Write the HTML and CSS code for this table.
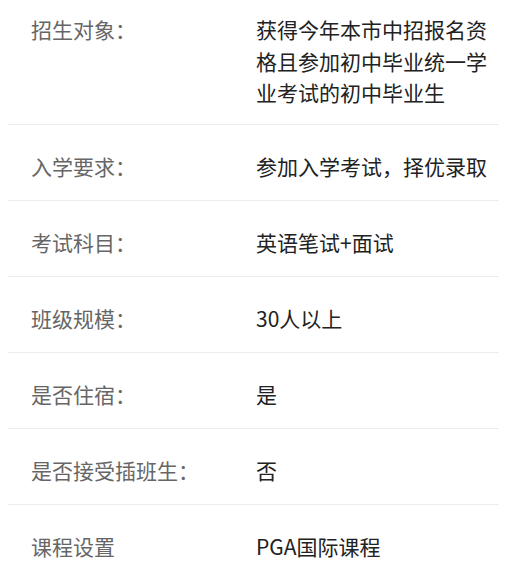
FILE: index.html
```html
<!DOCTYPE html>
<html lang="zh-CN">
<head>
  <meta charset="UTF-8">
  <meta name="viewport" content="width=device-width, initial-scale=1.0">
  <title>招生信息</title>
  <link rel="stylesheet" href="styles.css">
</head>
<body>
  <div class="info-list">
    <!-- 招生信息 -->
    <div class="info-row">
      <div class="info-label">招生对象：</div>
      <div class="info-value">获得今年本市中招报名资格且参加初中毕业统一学业考试的初中毕业生</div>
    </div>
    <div class="info-row">
      <div class="info-label">入学要求：</div>
      <div class="info-value">参加入学考试，择优录取</div>
    </div>
    <div class="info-row">
      <div class="info-label">考试科目：</div>
      <div class="info-value">英语笔试+面试</div>
    </div>
    <div class="info-row">
      <div class="info-label">班级规模：</div>
      <div class="info-value">30人以上</div>
    </div>
    <div class="info-row">
      <div class="info-label">是否住宿：</div>
      <div class="info-value">是</div>
    </div>
    <div class="info-row">
      <div class="info-label">是否接受插班生：</div>
      <div class="info-value">否</div>
    </div>
    <div class="info-row">
      <div class="info-label">课程设置</div>
      <div class="info-value">PGA国际课程</div>
    </div>
  </div>
</body>
</html>
```

FILE: styles.css
```css
body {
  margin: 0 8px;
  font-family: "Noto Sans CJK SC", "Noto Sans", sans-serif;
  font-size: 21px;
  line-height: 1.5;
  background: #fff;
}
.info-row {
  display: flex;
  padding: 26px 0 17.5px;
  border-bottom: 1px solid #ececec;
}
.info-row:first-child {
  padding-top: 14px;
  padding-bottom: 15px;
}
.info-label {
  width: 225px;
  padding-left: 23px;
  color: #666;
  flex-shrink: 0;
}
.info-value {
  width: 236px;
  color: #222;
}
```
